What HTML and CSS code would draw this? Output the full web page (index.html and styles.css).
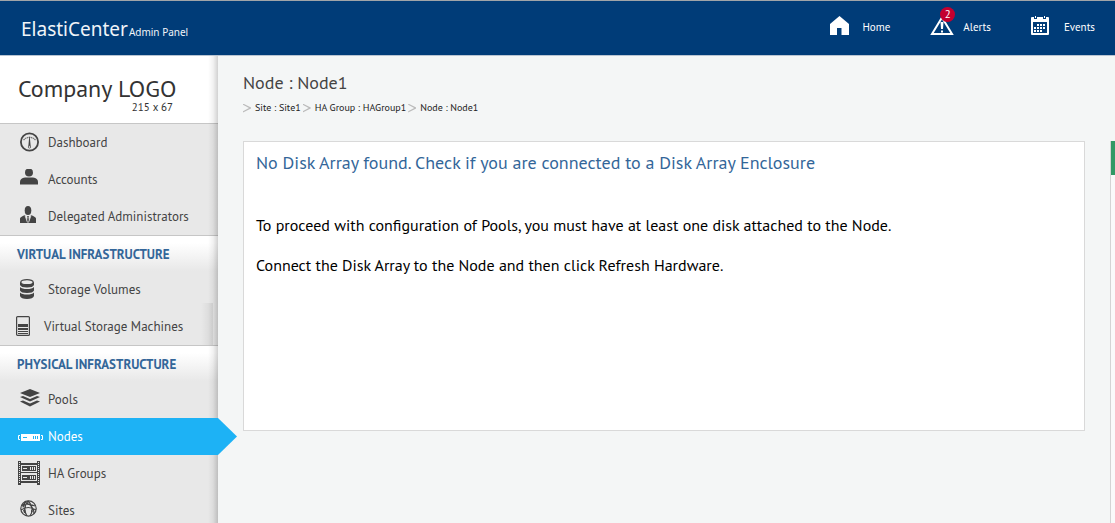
FILE: index.html
```html
<!DOCTYPE html>
<html lang="en">
<head>
<meta charset="utf-8">
<meta name="viewport" content="width=device-width, initial-scale=1">
<title>ElastiCenter Admin Panel</title>
<link rel="stylesheet" href="styles.css">
</head>
<body>
<header class="topbar">
  <div class="brand">ElastiCenter<span class="brand-sub">Admin Panel</span></div>
  <nav class="topnav" aria-label="Quick links">
    <a href="#"><span class="top-icon"><svg width="20" height="20" viewBox="0 0 20 20"><path fill="#fff" d="M10.500 0 20 8V19H12.500V12H8V19H1V8Z"/></svg></span>Home</a>
    <a href="#"><span class="top-icon"><svg width="24" height="20" viewBox="0 0 24 20"><path fill="none" stroke="#fff" stroke-width="2" d="M12 1.500 22 18H2Z"/><path fill="#fff" d="M10.500 6h3l-.5 7h-2zM11 14.500h2v2h-2z"/></svg><span class="badge">2</span></span>Alerts</a>
    <a href="#"><span class="top-icon"><svg width="18" height="20" viewBox="0 1 18 20"><path fill="#fff" fill-rule="evenodd" d="M1 2H3V4H6V2H12V4H15V2H17Q18 2 18 3V19Q18 20 17 20H1Q0 20 0 19V3Q0 2 1 2ZM2 7V18H16V7Z"/><path fill="#fff" d="M4 0h1v3H4zM13 0h1v3h-1z"/><path fill="#fff" d="M6 9h2v2H6zM9 9h2v2H9zM12 9h2v2h-2zM3 12h2v2H3zM6 12h2v2H6zM9 12h2v2H9zM12 12h2v2h-2zM3 15h2v2H3zM6 15h2v2H6zM9 15h2v2H9z"/></svg></span>Events</a>
  </nav>
</header>
<div class="shell">
  <aside class="sidebar">
    <div class="company"><div class="company-name">Company LOGO</div><div class="company-size">215 x 67</div></div>
    <nav aria-label="Main">
      <ul class="menu">
        <li><a href="#"><span class="icon"><svg width="20" height="20" viewBox="0 0 20 20"><circle cx="9.500" cy="10" r="8.600" fill="none" stroke="#444" stroke-width="1.800"/><path d="M3.500 8Q9.500 2.500 15.500 8" fill="none" stroke="#777" stroke-width="1.300" stroke-dasharray="1.500 .5"/><path d="M9.200 5h.6l1 10.500h-2.600z" fill="#444"/><circle cx="9.500" cy="15" r="1.200" fill="#e8e8e8" stroke="#555" stroke-width=".7"/></svg></span>Dashboard</a></li>
        <li><a href="#"><span class="icon"><svg width="18" height="20" viewBox="0 2 18 20"><circle cx="9" cy="5.500" r="4" fill="#444"/><path fill="#444" d="M0 17.500V15Q0 11 5 10.500H13Q18 11 18 15V17.500Z"/></svg></span>Accounts</a></li>
        <li><a href="#"><span class="icon"><svg width="16" height="20" viewBox="0 1 16 20"><ellipse cx="8" cy="5.500" rx="3.300" ry="4.500" fill="#444"/><path fill="#444" d="M0 18V13.500Q0 12 5 10L7 16 7.500 12 7 11H9L8.500 12 9 16 11 10Q16 12 16 13.500V18Z"/><path fill="none" stroke="#e8e8e8" stroke-width=".8" d="M5 10.500 7.500 17.500M11 10.500 8.500 17.500"/></svg></span>Delegated Administrators</a></li>
      </ul>
      <h2 class="section">Virtual Infrastructure</h2>
      <ul class="menu menu-shaded">
        <li><a href="#"><span class="icon"><svg width="14" height="20" viewBox="0 0 14 20"><path fill="#444" d="M0 3V6Q1 8.500 7 8.500T14 6V3ZM0 8V11.500Q1 14 7 14T14 11.500V8Q12 10 7 10T0 8ZM0 13.500V17Q1 20 7 20T14 17V13.500Q12 15.500 7 15.500T0 13.500Z"/><ellipse cx="7" cy="3.200" rx="6.200" ry="2.500" fill="#e8e8e8" stroke="#444" stroke-width="1.300"/></svg></span>Storage Volumes</a></li>
        <li><a class="outdent" href="#"><span class="icon"><svg width="14" height="20" viewBox="0 0 14 20"><rect x=".6" y=".6" width="12.800" height="18.800" rx="1" fill="none" stroke="#444" stroke-width="1.200"/><path fill="#444" d="M2 8h10v3H2zM2 12h10v2H2zM2 15h10v1H2zM2 17h10v1H2z"/></svg></span>Virtual Storage Machines</a></li>
      </ul>
      <h2 class="section">Physical Infrastructure</h2>
      <ul class="menu">
        <li><a href="#"><span class="icon"><svg width="20" height="20" viewBox="0 1 20 20"><g fill="#444"><path d="M0 5 10 1 20 5 10 9Z"/><path d="M0 9 3 8 10 11 17 8 20 9 10 13.500Z"/><path d="M0 13.500 3 12.500 10 15.500 17 12.500 20 13.500 10 18.500Z"/></g></svg></span>Pools</a></li>
        <li class="current"><a href="#" aria-current="page"><span class="icon icon-wide"><svg width="26" height="20" viewBox="0 0 26 20"><path fill="#fff" d="M3 8h19v7H3z"/><path d="M2 9.500H.5v4H2M23 9.500h1.500v4H23" fill="none" stroke="#fff"/><path d="M5 11.500h4M15.500 10v3M17.500 10v3M19.500 10v3" stroke="#1db2f5"/></svg></span>Nodes</a></li>
        <li><a href="#"><span class="icon icon-wide"><svg width="22" height="24" viewBox="0 0 22 24"><path fill="#444" d="M0 0h3v24H0zM19 0h3v24h-3zM3 2h16v2H3zM3 11h16v1H3zM3 20h16v2H3z"/><path d="M1.500 1v22M20.500 1v22" stroke="#e8e8e8" stroke-dasharray="1 1"/><path fill="#444" d="M4 5h14v5H4zM4 14h14v5H4z"/><path stroke="#e8e8e8" d="M5 7.500h4M12.500 6v3M14.500 6v3M16.500 6v3M5 16.500h4M12.500 15v3M14.500 15v3M16.500 15v3"/></svg></span>HA Groups</a></li>
        <li><a href="#"><span class="icon"><svg width="18" height="20" viewBox="0 0 18 20"><g fill="none" stroke="#444" stroke-width="1.200"><circle cx="8.500" cy="8.500" r="7.700"/><path d="M8 1Q2 8 7 16M8 1Q15 8 10 16M4 2Q14 5 14 14M2 5Q8 3 15 6M1 10Q8 5 16 10"/></g><path fill="#444" d="M2 5 5 2 5 5 3 8ZM3 10 5 9 6 13 4 13ZM11 10 13 11 11 14Z"/></svg></span>Sites</a></li>
      </ul>
    </nav>
  </aside>
  <main class="content">
    <h1>Node : Node1</h1>
    <nav class="crumbs" aria-label="Breadcrumb"><a href="#">Site : Site1</a><a href="#">HA Group : HAGroup1</a><a href="#">Node : Node1</a></nav>
    <section class="panel">
      <h2>No Disk Array found. Check if you are connected to a Disk Array Enclosure</h2>
      <p>To proceed with configuration of Pools, you must have at least one disk attached to the Node.</p>
      <p>Connect the Disk Array to the Node and then click Refresh Hardware.</p>
    </section>
  </main>
  <div class="rail"><div class="rail-head"></div></div>
</div>
</body>
</html>
```
FILE: styles.css
```css
* { box-sizing: border-box; }
body {
  margin: 0;
  height: 100vh;
  display: flex;
  flex-direction: column;
  overflow: hidden;
  background: #f4f6f6;
  color: #444;
  font-family: "PT Sans", "Noto Sans", sans-serif;
  font-size: 13px;
}
a { color: inherit; text-decoration: none; }
h1, h2, p, ul { margin: 0; padding: 0; font-weight: 400; }
ul { list-style: none; }
svg { display: block; }

.topbar {
  flex: none;
  display: flex;
  justify-content: space-between;
  height: 56px;
  padding: 0 20px 0 21px;
  border-top: 1px solid #a0a4a8;
  border-bottom: 1px solid #b8c4d2;
  background: #003c78;
  color: #fff;
}
.brand { padding-top: 14px; font-family: "Noto Sans", sans-serif; font-size: 19px; line-height: 28px; color: #f0f4f8; white-space: nowrap; }
.brand-sub { margin-left: 1px; font-size: 10px; }
.topnav { display: flex; gap: 40px; height: 52px; align-items: center; font-size: 11px; }
.topnav a { display: flex; align-items: center; }
.top-icon { position: relative; width: 33px; margin-top: -3px; }
.badge {
  position: absolute;
  top: -9px;
  left: 10px;
  width: 15px;
  height: 15px;
  border-radius: 50%;
  background: #c3002f;
  font-size: 11px;
  line-height: 15px;
  text-align: center;
}

.shell { flex: 1; display: flex; min-height: 0; }
.sidebar {
  position: relative;
  flex: none;
  width: 218px;
  background: #e8e8e8;
}
.sidebar::after {
  content: "";
  position: absolute;
  inset: 0 0 0 auto;
  width: 10px;
  background: linear-gradient(90deg, transparent, rgba(0, 0, 0, .05) 50%, rgba(0, 0, 0, .18));
  pointer-events: none;
}
.company { height: 68px; padding: 18px 41px 0 18px; border-bottom: 1px solid #c6c6c6; background: #fff; color: #333; white-space: nowrap; }
.company-name { font-size: 24px; line-height: 30px; }
.company-size { margin-right: 4px; font-size: 11px; line-height: 6px; text-align: right; }
.menu a { display: flex; align-items: center; height: 37px; padding-left: 20px; white-space: nowrap; }
.menu a.outdent { padding-left: 16px; }
.icon { flex: none; width: 28px; margin-top: -2px; }
.icon-wide { width: 30px; margin-left: -2px; }
.menu-shaded { background: linear-gradient(90deg, transparent, rgba(0, 0, 0, .08)) 201px 100% / 12px 42px no-repeat; }
.section {
  height: 36px;
  padding-left: 17px;
  border-top: 1px solid #c6c6c6;
  background: linear-gradient(#fff 20%, #e8e8e8);
  color: #336699;
  font-size: 13px;
  font-weight: 700;
  line-height: 37px;
  text-transform: uppercase;
  white-space: nowrap;
}
.current { position: relative; z-index: 1; background: #1db2f5; color: #fff; }
.current::after {
  content: "";
  position: absolute;
  top: 0;
  left: 100%;
  width: 19px;
  height: 100%;
  background: #1db2f5;
  clip-path: polygon(0 0, 100% 50%, 0 100%);
}

.content { flex: 1; min-width: 0; padding: 15px 25px 0; }
h1 { font-size: 18px; line-height: 24px; }
.crumbs { display: flex; gap: 2px; margin-top: 5px; font-size: 10px; line-height: 16px; color: #222; }
.crumbs a { display: flex; align-items: center; gap: 4px; }
.crumbs a::before { content: ""; width: 8px; height: 9px; background: #bbb; clip-path: polygon(0 0, 100% 45%, 100% 55%, 0 100%, 0 86%, 75% 50%, 0 14%); }
.panel { min-height: 290px; margin-top: 25px; padding: 9px 12px; border: 1px solid #d9d9d9; background: #fff; color: #000; }
.panel h2 { margin-bottom: 40px; color: #336699; font-size: 18px; line-height: 24px; }
.panel p { margin-bottom: 20px; font-size: 16px; line-height: 20px; }
.rail { flex: none; width: 5px; margin-top: 85px; border-left: 1px solid #d4d4d4; background: #fafafa; }
.rail-head { height: 34px; background: #339966; }
```
